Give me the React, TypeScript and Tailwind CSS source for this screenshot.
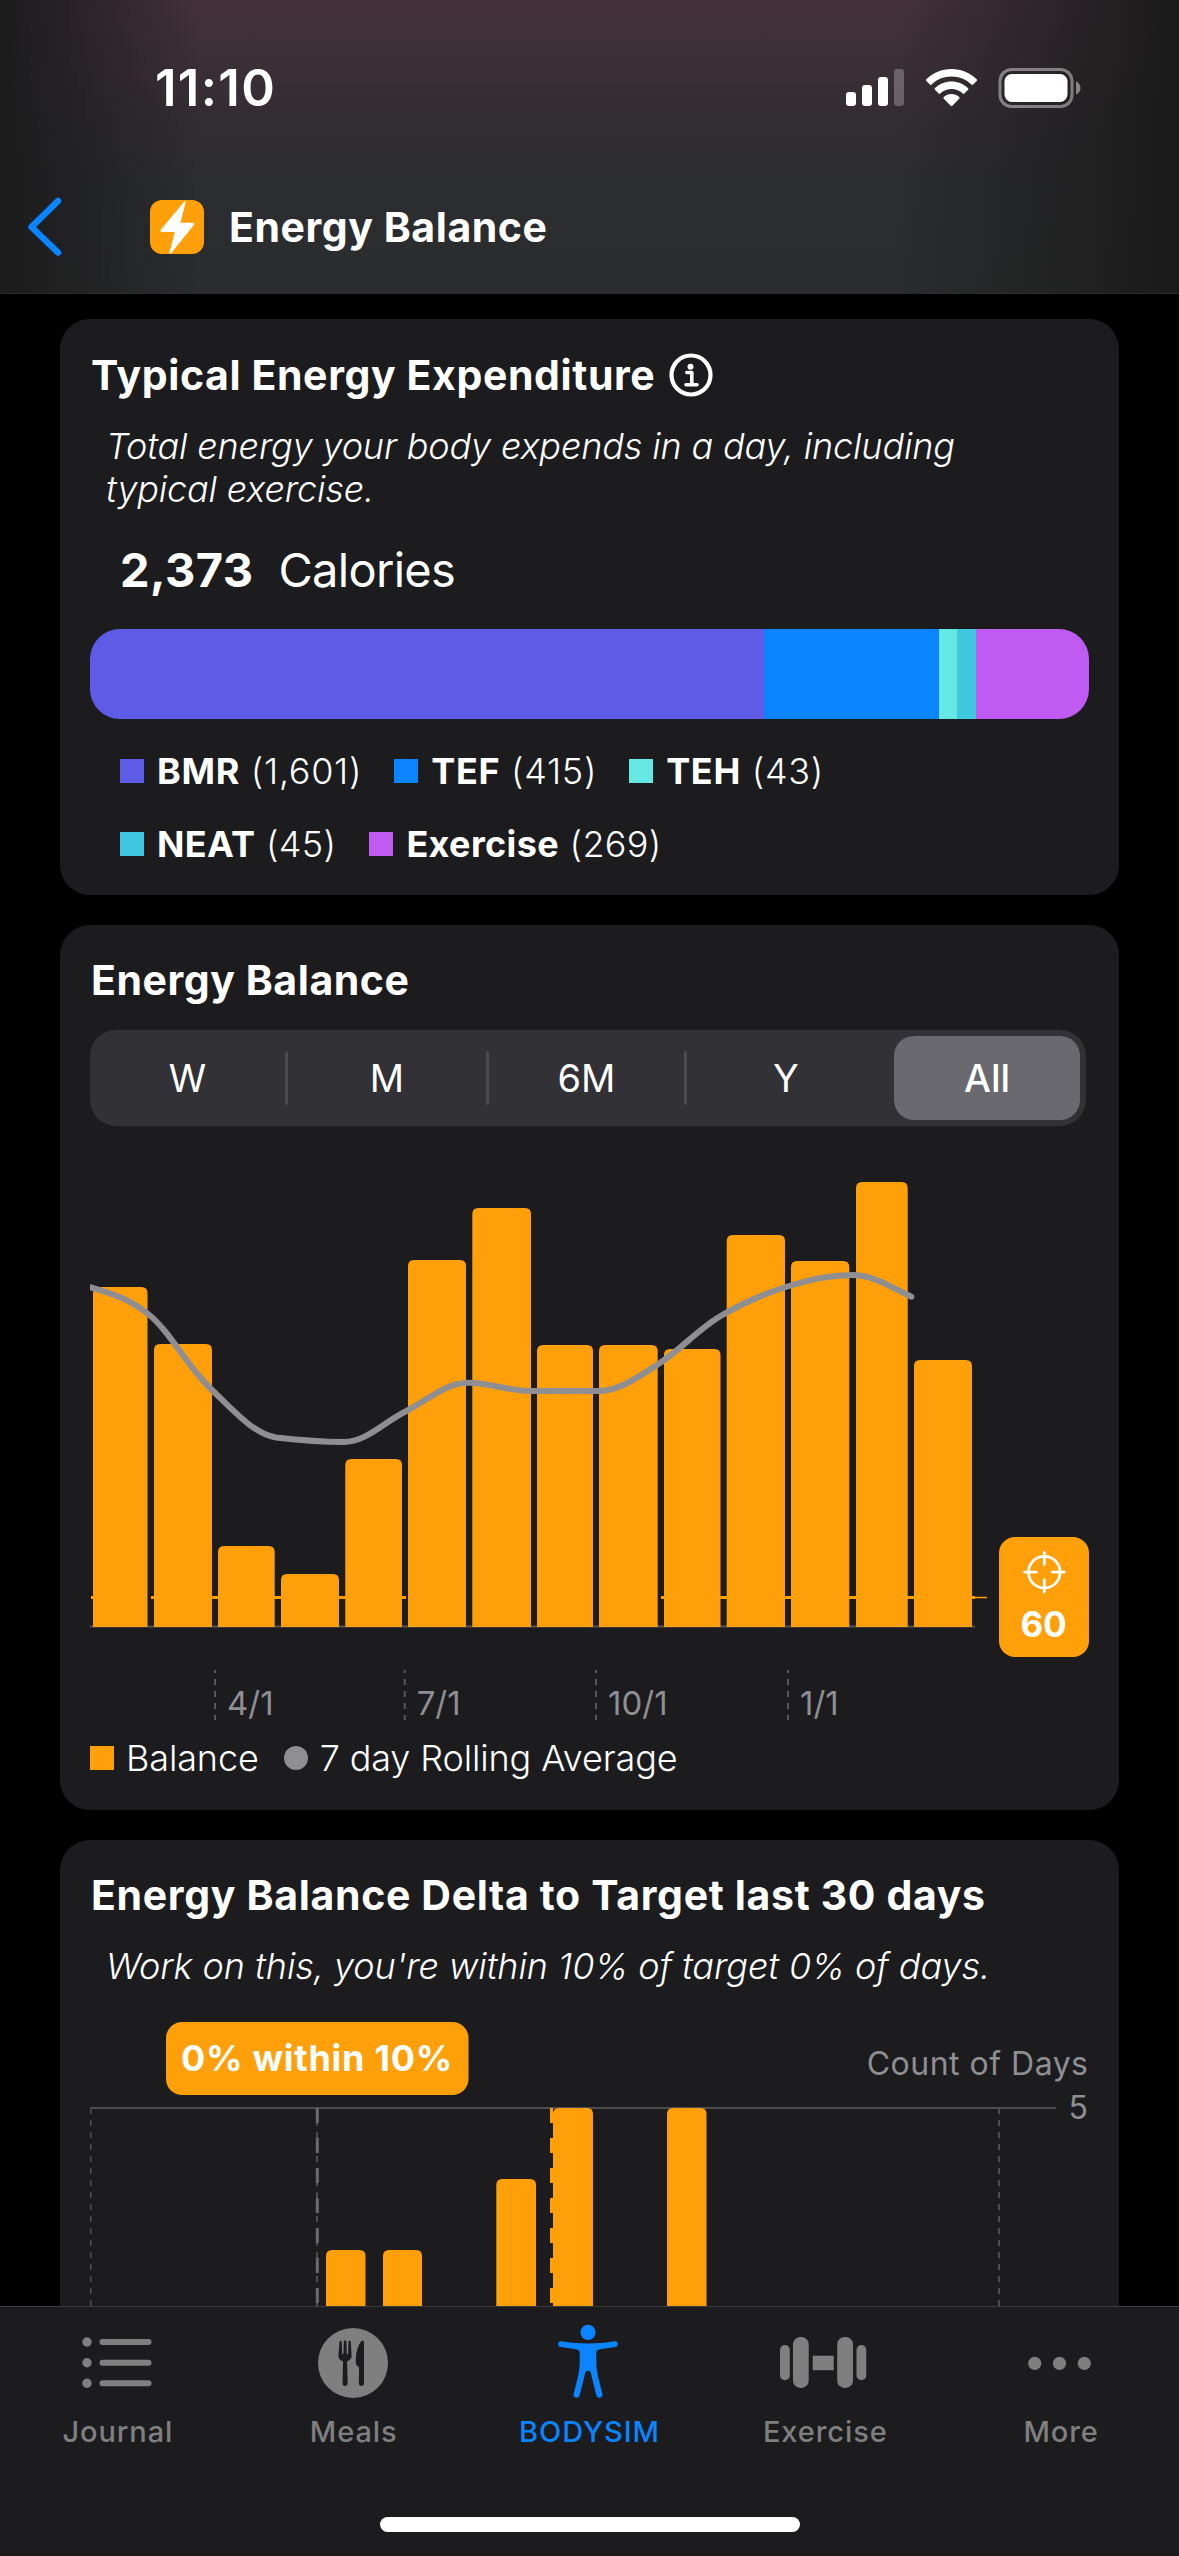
import React from "react";

const ORANGE = "#ff9f0a";
const GRAY = "#8e8e93";

type Bar = { x1: number; x2: number; top: number };

const balanceBars: Bar[] = [
  { x1: 93, x2: 147.5, top: 1287 },
  { x1: 154, x2: 212, top: 1344 },
  { x1: 218, x2: 274.7, top: 1546 },
  { x1: 281, x2: 339, top: 1574 },
  { x1: 345.3, x2: 402, top: 1459 },
  { x1: 408, x2: 466, top: 1260 },
  { x1: 472.3, x2: 531, top: 1208 },
  { x1: 537, x2: 593, top: 1345 },
  { x1: 599, x2: 657.7, top: 1345 },
  { x1: 664, x2: 720.5, top: 1349 },
  { x1: 726.7, x2: 785, top: 1235 },
  { x1: 791, x2: 849.3, top: 1261 },
  { x1: 856, x2: 907.7, top: 1182 },
  { x1: 914, x2: 972, top: 1360 },
];

const deltaBars: Bar[] = [
  { x1: 326, x2: 365.5, top: 2250 },
  { x1: 383, x2: 422, top: 2250 },
  { x1: 496.3, x2: 536, top: 2179 },
  { x1: 553, x2: 593, top: 2108 },
  { x1: 667, x2: 706.5, top: 2108 },
];

const axisTicks = [
  { x: 215, label: "4/1" },
  { x: 404.7, label: "7/1" },
  { x: 596, label: "10/1" },
  { x: 788, label: "1/1" },
];

function barPath({ x1, x2, top }: Bar, bottom: number) {
  const r = 6;
  return `M${x1} ${bottom}V${top + r}Q${x1} ${top} ${x1 + r} ${top}H${x2 - r}Q${x2} ${top} ${x2} ${top + r}V${bottom}Z`;
}

function StatusBar() {
  return (
    <div className="flex h-[176px] items-center justify-between pl-[155px] pr-[98px]">
      <div className="text-[51px] font-semibold leading-[50px] tracking-[1.300px]">11:10</div>
      <div className="flex items-center">
        <svg width="59" height="40" viewBox="846 68 59 40">
          <rect x="846" y="92" width="10" height="14" rx="3" fill="#fff" />
          <rect x="862" y="85" width="10" height="21" rx="3" fill="#fff" />
          <rect x="878" y="77" width="10" height="29" rx="3" fill="#fff" />
          <rect x="894" y="69" width="10" height="37" rx="3" fill="#fff" fillOpacity="0.25" />
        </svg>
        <svg className="ml-[21px]" width="53" height="40" viewBox="926 68 53 40" fill="#fff">
          <path d="M951.5 69c9.8 0 18.700 3.900 25.200 10.200.5.5.5 1.200 0 1.700l-3.600 3.700c-.5.5-1.200.5-1.700 0-5.200-5.100-12.200-8-19.900-8s-14.700 2.900-19.900 8c-.5.5-1.200.5-1.700 0l-3.600-3.700c-.5-.5-.5-1.200 0-1.700C932.800 72.900 941.700 69 951.500 69Z" />
          <path d="M951.500 81.500c6.400 0 12.200 2.500 16.500 6.600.5.5.5 1.200 0 1.700l-3.600 3.700c-.5.500-1.200.5-1.700 0-2.900-2.800-6.900-4.500-11.200-4.500s-8.300 1.700-11.200 4.500c-.5.500-1.200.5-1.700 0l-3.600-3.700c-.5-.5-.5-1.200 0-1.700 4.300-4.100 10.100-6.600 16.500-6.600Z" />
          <path d="M951.500 94c3 0 5.700 1.100 7.700 3 .5.500.5 1.200 0 1.700l-6.900 7c-.4.500-1.200.5-1.600 0l-6.900-7c-.5-.5-.5-1.200 0-1.700 2-1.900 4.700-3 7.700-3Z" />
        </svg>
        <svg className="ml-[19px]" width="83" height="40" viewBox="998.500 67.500 83 40">
          <rect x="1000.500" y="69" width="72" height="37" rx="11.500" fill="none" stroke="#fff" strokeOpacity="0.42" strokeWidth="3" />
          <rect x="1005" y="73.500" width="63" height="28" rx="7.500" fill="#fff" />
          <path d="M1076.500 81v13c2.700-1.100 4.500-3.600 4.500-6.500s-1.800-5.400-4.500-6.500Z" fill="#fff" fillOpacity="0.45" />
        </svg>
      </div>
    </div>
  );
}

function Header() {
  return (
    <header className="h-[294px] shrink-0 border-b border-[#2b2b2c] bg-[linear-gradient(90deg,#1c1c1d_0%,rgba(28,28,29,0.85)_3%,rgba(30,29,31,0)_17%,rgba(30,30,30,0)_76%,rgba(28,28,28,0.75)_93%,#1a1a1a_100%),linear-gradient(180deg,#44303b_0%,#3b2f36_22%,#312d32_42%,#2c2d30_62%,#2b2c2d_100%)]">
      <StatusBar />
      <div className="flex h-[102px] items-center pl-[27px]">
        <svg width="36" height="60" viewBox="27 197 36 60" fill="none" stroke="#0a84ff" strokeWidth="6.500" strokeLinecap="round" strokeLinejoin="round">
          <path d="M58 201 31.500 227 58 252.500" />
        </svg>
        <div className="ml-[87px] flex size-[54px] items-center justify-center rounded-[12px] bg-[#ff9f0a]">
          <svg width="54" height="54" viewBox="150 200 54 54" fill="#fff">
            <path d="M184.300 201.500c.5-1 1.600-.5 1.400.5l-5.300 20.800h12.400c1.300 0 1.700 1.200 1 2.200L171.300 253c-.9 1.100-2.100.4-1.700-.8l5.200-20.200h-13c-1.300 0-1.700-1.200-1-2.200Z" />
          </svg>
        </div>
        <h1 className="ml-[25px] text-[41px] font-bold leading-[50px] tracking-[0.550px]">Energy Balance</h1>
      </div>
    </header>
  );
}

const segments = [
  "w-[674px] bg-[#5e5ce6]",
  "w-[175px] bg-[#0a84ff]",
  "w-[18px] bg-[#66e8e2]",
  "w-[19px] bg-[#40c8e0]",
  "flex-1 bg-[#bf5af2]",
];

function LegendItem({ swatch, name, value }: { swatch: string; name: string; value: string }) {
  return (
    <div className="flex items-center">
      <span className={"size-[24px] " + swatch} />
      <span className="ml-[13px] whitespace-nowrap text-[36px] leading-[40px]">
        <b className="font-bold">{name}</b> <span className="font-light">({value})</span>
      </span>
    </div>
  );
}

function ExpenditureCard() {
  return (
    <section className="h-[576px] w-[1059px] shrink-0 rounded-[30px] bg-[#1c1c1e] px-[30px] pt-[34px]">
      <div className="ml-[1px] flex h-[44px] items-center">
        <h2 className="text-[41px] font-bold leading-[44px] tracking-[0.610px]">Typical Energy Expenditure</h2>
        <svg className="ml-[14px]" width="44" height="44" viewBox="0 0 44 44" fill="none" stroke="#fff">
          <circle cx="22" cy="22" r="19.500" strokeWidth="4.200" />
          <circle cx="21.500" cy="13.800" r="3" fill="#fff" stroke="none" />
          <path d="M17.800 19.500h5v12M17 31.800h11" strokeWidth="3.600" strokeLinecap="round" strokeLinejoin="round" />
        </svg>
      </div>
      <p className="ml-[16px] mt-[28px] whitespace-nowrap text-[36px] font-light italic leading-[43px] tracking-[-0.150px]">
        Total energy your body expends in a day, including
        <br />
        typical exercise.
      </p>
      <div className="ml-[30px] mt-[34px] flex gap-[25px] text-[47px] leading-[50px]">
        <span className="font-bold tracking-[0.400px]">2,373</span>
        <span className="tracking-[-0.700px]">Calories</span>
      </div>
      <div className="mt-[34px] flex h-[90px] w-[999px] overflow-hidden rounded-[30px]">
        {segments.map((s) => (
          <div key={s} className={s} />
        ))}
      </div>
      <div className="ml-[30px] mt-[32px] flex gap-[32px] tracking-[0.680px]">
        <LegendItem swatch="bg-[#5e5ce6]" name="BMR" value="1,601" />
        <LegendItem swatch="bg-[#0a84ff]" name="TEF" value="415" />
        <LegendItem swatch="bg-[#66e8e2]" name="TEH" value="43" />
      </div>
      <div className="ml-[30px] mt-[33px] flex gap-[33px] tracking-[0.350px]">
        <LegendItem swatch="bg-[#40c8e0]" name="NEAT" value="45" />
        <LegendItem swatch="bg-[#bf5af2]" name="Exercise" value="269" />
      </div>
    </section>
  );
}

function RangePicker() {
  const item = "flex items-center justify-center";
  return (
    <div className="mt-[28px] flex h-[96px] w-[996px] items-center rounded-[26px] bg-[#323136] text-[38px] leading-[40px]">
      <div className={item + " w-[195px]"}>W</div>
      <div className="h-[54px] w-[3px] rounded-full bg-[#4c4b50]" />
      <div className={item + " w-[198px]"}>M</div>
      <div className="h-[54px] w-[3px] rounded-full bg-[#4c4b50]" />
      <div className={item + " w-[195px]"}>6M</div>
      <div className="h-[54px] w-[3px] rounded-full bg-[#4c4b50]" />
      <div className={item + " w-[198px]"}>Y</div>
      <div className={item + " ml-[9px] h-[84px] w-[186px] rounded-[20px] bg-[#6a696f] font-medium"}>All</div>
    </div>
  );
}

function BalanceChart() {
  return (
    <svg className="block" width="999" height="610" viewBox="90 1126 999 610">
      <path d="M90 1626.500H975" stroke="#545458" strokeWidth="2" />
      {balanceBars.map((b) => (
        <path key={b.x1} d={barPath(b, 1627)} fill={ORANGE} />
      ))}
      <path d="M91 1597.500H147M151 1597.500H406M661 1597.500H975" stroke={ORANGE} strokeWidth="3" />
      <path d="M975 1597.500H987" stroke={ORANGE} strokeWidth="1.500" />
      <path
        d="M88 1286.500C110 1293 128 1298 147.500 1313.500C170 1331 185 1364 212 1390C234 1411 254 1434 276 1437.500C298 1440 322 1442 344 1442C366 1442 384 1422 406.500 1411C428 1400 445 1383 468 1382.800C490 1383 510 1391 531.500 1391H599C619 1391 638 1377 657 1365C681 1350 700 1327 723 1314.600C745 1302 766 1293 789 1286C811 1279 830 1275 852.500 1275C873 1275 891 1287 911.400 1296.700"
        fill="none"
        stroke={GRAY}
        strokeWidth="6"
        strokeLinecap="round"
      />
      <rect x="999" y="1537" width="90" height="120" rx="16" fill={ORANGE} />
      <g fill="none" stroke="#fff" strokeWidth="2.800" strokeLinecap="round">
        <circle cx="1044.300" cy="1572.200" r="15.800" />
        <path d="M1044.300 1552.500v12M1044.300 1580v12M1024.500 1572.200h12M1052.200 1572.200h12" />
      </g>
      <text x="1043.500" y="1637" textAnchor="middle" className="text-[35px] font-bold" fill="#fff" textLength="46">60</text>
      {axisTicks.map((t) => (
        <g key={t.label}>
          <path d={`M${t.x} 1670V1720`} stroke="#58585c" strokeWidth="2" strokeDasharray="6 6" strokeDashoffset="3" />
          <text x={t.x + 12} y="1715" className="text-[33px]" fill={GRAY}>{t.label}</text>
        </g>
      ))}
    </svg>
  );
}

function BalanceCard() {
  return (
    <section className="mt-[30px] h-[885px] w-[1059px] shrink-0 rounded-[30px] bg-[#1c1c1e] px-[30px] pt-[33px]">
      <h2 className="ml-[1px] text-[41px] font-bold leading-[44px] tracking-[0.550px]">Energy Balance</h2>
      <RangePicker />
      <BalanceChart />
      <div className="mt-[2px] flex h-[40px] items-center text-[36px] font-light leading-[40px] tracking-[-0.120px]">
        <span className="size-[24px] bg-[#ff9f0a]" />
        <span className="ml-[12px]">Balance</span>
        <span className="ml-[25px] size-[24px] rounded-full bg-[#8e8e93]" />
        <span className="ml-[12px]">7 day Rolling Average</span>
      </div>
    </section>
  );
}

function DeltaChart() {
  return (
    <svg className="block" width="999" height="320" viewBox="90 1987 999 320">
      <rect x="166" y="2022" width="302.500" height="73" rx="16" fill={ORANGE} />
      <text x="317" y="2071" textAnchor="middle" className="text-[36px] font-bold tracking-[0.750px]" fill="#fff">0% within 10%</text>
      <text x="1088.500" y="2075" textAnchor="end" className="text-[32px] tracking-[0.500px]" fill={GRAY}>Count of Days</text>
      <text x="1088" y="2119" textAnchor="end" className="text-[32px]" fill={GRAY}>5</text>
      <path d="M90 2108H1056" stroke="#4d4d50" strokeWidth="2" />
      <g stroke="#4d4d50" strokeWidth="2" strokeDasharray="6 6">
        <path d="M90.500 2108V2307" />
        <path d="M317 2108V2307" />
        <path d="M999 2108V2307" />
      </g>
      <path d="M317.300 2108V2307" stroke="#6a6a6e" strokeWidth="3" strokeDasharray="15 15" />
      <path d="M551.500 2108V2307" stroke={ORANGE} strokeWidth="3" strokeDasharray="15 15" />
      {deltaBars.map((b) => (
        <path key={b.x1} d={barPath(b, 2307)} fill={ORANGE} />
      ))}
    </svg>
  );
}

function DeltaCard() {
  return (
    <section className="mt-[30px] h-[700px] w-[1059px] shrink-0 rounded-[30px] bg-[#1c1c1e] px-[30px] pt-[33px]">
      <h2 className="ml-[1px] whitespace-nowrap text-[41px] font-bold leading-[44px] tracking-[0.660px]">Energy Balance Delta to Target last 30 days</h2>
      <p className="ml-[16px] mt-[28px] whitespace-nowrap text-[36px] font-light italic leading-[42px] tracking-[-0.050px]">
        Work on this, you&apos;re within 10% of target 0% of days.
      </p>
      <DeltaChart />
    </section>
  );
}

const tabs = [
  {
    label: "Journal",
    text: "text-[#7f7f80]",
    icon: (
      <g fill="#7f7f80">
        <circle cx="45.500" cy="35" r="4.700" /><circle cx="45.500" cy="55.700" r="4.700" /><circle cx="45.500" cy="76.300" r="4.700" />
        <rect x="58" y="32" width="52" height="6" rx="3" /><rect x="58" y="52.700" width="52" height="6" rx="3" /><rect x="58" y="73.300" width="52" height="6" rx="3" />
      </g>
    ),
  },
  {
    label: "Meals",
    text: "text-[#7f7f80]",
    icon: (
      <g>
        <circle cx="75.500" cy="56" r="35" fill="#7f7f80" />
        <path fill="#1c1c1e" d="M62 34.500c.8-1.200 2.100-1 2.200.4l.4 11.500c0 1 1.300 1 1.400 0l.3-11.700c.1-1.500 2.500-1.500 2.600 0l.3 11.700c.1 1 1.400 1 1.400 0l.4-11.500c.1-1.400 1.700-1.600 2.300-.2l.8 14c.1 2.900-1.600 4.300-4 5.300-.5.300-.5 1-.5 1.500l.6 20.500c.1 4-5.300 4-5.200 0l.5-20.500c0-.6 0-1.200-.6-1.500-2.400-1-4.100-2.400-4-5.300Z" />
        <path fill="#1c1c1e" d="M83.500 34.500c1.200-1.300 3-1 3 .8v40.900c0 3.600-5.200 3.600-5.200 0l.3-14.500c0-1.200-.4-1.800-1.300-2.500-1.500-1.200-2-2.200-2-4.200 0-8 1.500-15.700 5.200-20.500Z" />
      </g>
    ),
  },
  {
    label: "BODYSIM",
    text: "text-[#0a84ff]",
    icon: (
      <g fill="#0a84ff">
        <circle cx="75.500" cy="25.300" r="7.600" />
        <path d="M49 34.200C58 35.800 67 36.400 75.500 36.400S93 35.800 102 34.200c4-.6 4.500 5.300.8 5.900L87.500 42.300c-2.700.4-3.700 1.300-3.700 4v9c0 5.700.8 9.700 1.800 14.700L90 87.300c.9 3.800-5.100 5-6.100 1.100L78.300 66c-.7-2.900-4.900-2.900-5.600 0L67.100 88.400c-1 3.900-7 2.700-6.100-1.100L65.400 70c1-5 1.800-9 1.800-14.700v-9c0-2.700-1-3.600-3.700-4L48.200 40.100c-3.700-.6-3.200-6.500.8-5.900Z" />
      </g>
    ),
  },
  {
    label: "Exercise",
    text: "text-[#7f7f80]",
    icon: (
      <g fill="#7f7f80">
        <rect x="31.500" y="38" width="9.800" height="35.300" rx="4.900" />
        <rect x="44.500" y="30" width="15.700" height="51" rx="7.300" />
        <rect x="64.200" y="48.700" width="21" height="14.500" />
        <rect x="88.700" y="30" width="15.800" height="51" rx="7.300" />
        <rect x="108" y="38" width="9.800" height="35.300" rx="4.900" />
      </g>
    ),
  },
  {
    label: "More",
    text: "text-[#7f7f80]",
    icon: (
      <g fill="#7f7f80">
        <circle cx="50.200" cy="56.300" r="6.600" /><circle cx="75" cy="56.300" r="6.600" /><circle cx="99.800" cy="56.300" r="6.600" />
      </g>
    ),
  },
];

function TabBar() {
  return (
    <nav className="flex h-[250px] shrink-0 flex-col items-center border-t border-[#3c3c3f] bg-[#1c1c1e]">
      <div className="flex h-[210px] w-full">
        {tabs.map((t) => (
          <div key={t.label} className="flex flex-1 flex-col items-center">
            <svg width="150" height="100" viewBox="1.500 0 150 100">{t.icon}</svg>
            <span className={"mt-[5px] text-[29px] font-medium leading-[40px] tracking-[0.900px] " + t.text}>{t.label}</span>
          </div>
        ))}
      </div>
      <div className="h-[15px] w-[420px] rounded-full bg-white" />
    </nav>
  );
}

export default function App() {
  return (
    <div className="flex h-[2556px] w-[1179px] flex-col overflow-hidden bg-black font-['Inter',sans-serif] text-white">
      <Header />
      <main className="flex min-h-0 flex-1 flex-col overflow-hidden pl-[60px] pt-[25px]">
        <ExpenditureCard />
        <BalanceCard />
        <DeltaCard />
      </main>
      <TabBar />
    </div>
  );
}
